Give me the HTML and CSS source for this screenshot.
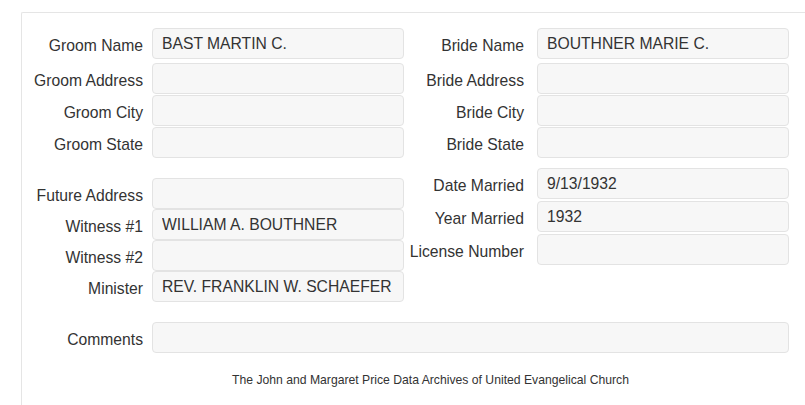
FILE: index.html
```html
<!DOCTYPE html>
<html lang="en">
<head>
    <meta charset="UTF-8">
    <title>Marriage Record</title>
    <link rel="stylesheet" href="styles.css">
</head>
<body>

    <div class="panel">
        <div class="cols">
            <div class="stack first">
                <div class="row"><label>Groom Name</label><input type="text" value="BAST MARTIN C." readonly></div>
                <div class="row"><label>Groom Address</label><input type="text" readonly></div>
                <div class="row"><label>Groom City</label><input type="text" readonly></div>
                <div class="row"><label>Groom State</label><input type="text" readonly></div>
            </div>
            <div class="stack first right">
                <div class="row"><label>Bride Name</label><input type="text" value="BOUTHNER MARIE C." readonly></div>
                <div class="row"><label>Bride Address</label><input type="text" readonly></div>
                <div class="row"><label>Bride City</label><input type="text" readonly></div>
                <div class="row"><label>Bride State</label><input type="text" readonly></div>
            </div>
            <div class="stack second">
                <div class="row"><label>Future Address</label><input type="text" readonly></div>
                <div class="row"><label>Witness #1</label><input type="text" value="WILLIAM A. BOUTHNER" readonly></div>
                <div class="row"><label>Witness #2</label><input type="text" readonly></div>
                <div class="row"><label>Minister</label><input type="text" value="REV. FRANKLIN W. SCHAEFER" readonly></div>
            </div>
            <div class="stack second right">
                <div class="row"><label>Date Married</label><input type="text" value="9/13/1932" readonly></div>
                <div class="row"><label>Year Married</label><input type="text" value="1932" readonly></div>
                <div class="row"><label>License Number</label><input type="text" readonly></div>
            </div>
        </div>

        <div class="row comments"><label>Comments</label><input type="text" readonly></div>

        <p class="footer">The John and Margaret Price Data Archives of United Evangelical Church</p>
    </div>

</body>
</html>
```

FILE: styles.css
```css
body {
    margin: 0;
    height: 405px;
    overflow: hidden;
    font-family: "Liberation Sans", Arial, sans-serif;
    color: #333;
    background: #fff;
}
.panel {
    box-sizing: border-box;
    margin: 12px 0 0 21px;
    width: 818px;
    height: 393px;
    border-top: 1px solid #e5e5e5;
    border-left: 1px solid #e5e5e5;
    border-top-left-radius: 2px;
    padding-top: 15px;
}
.cols {
    display: grid;
    grid-template-columns: 382px 385px;
    align-items: start;
}
.stack {
    display: flex;
    flex-direction: column;
}
.stack.first {
    gap: 1px;
}
.stack.first .row:first-child {
    margin-bottom: 3px;
}
.stack.second {
    margin-top: 20px;
    gap: 0;
}
.stack.second.right {
    margin-top: 10px;
    gap: 2px;
}
.row {
    display: grid;
    grid-template-columns: 121px 252px;
    column-gap: 9px;
    align-items: center;
}
.right .row {
    grid-template-columns: 120px 252px;
    column-gap: 13px;
}
label {
    text-align: right;
    font-size: 15.7px;
    padding-top: 5px;
}
input {
    box-sizing: border-box;
    width: 100%;
    height: 31px;
    padding: 0 9px;
    font-family: inherit;
    font-size: 15.7px;
    color: #333;
    background: #f7f7f7;
    border: 1px solid #e3e3e3;
    border-radius: 4px;
    outline: none;
}
.comments {
    margin-top: 20px;
    grid-template-columns: 121px 637px;
}
.footer {
    margin: 19px 0 0;
    text-align: center;
    font-size: 12.2px;
    line-height: 17px;
}
```
